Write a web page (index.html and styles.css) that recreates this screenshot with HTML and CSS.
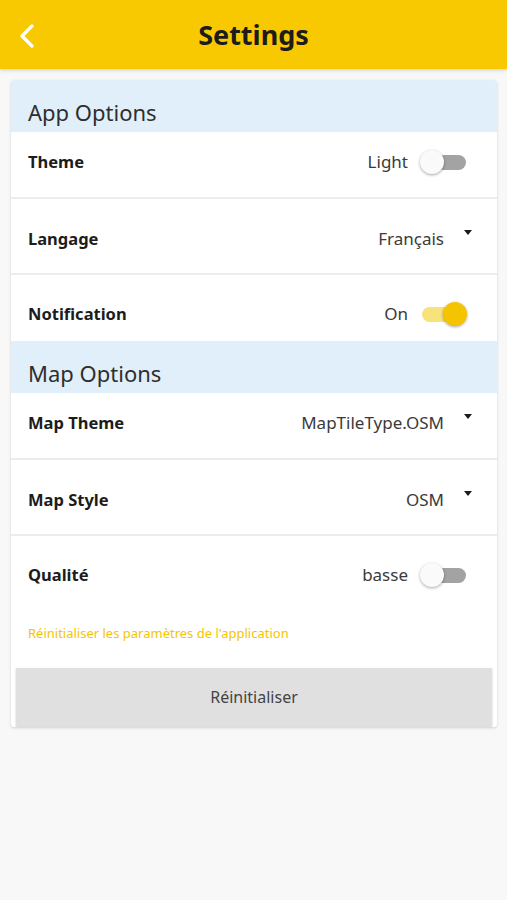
FILE: index.html
```html
<!DOCTYPE html>
<html lang="fr">
<head>
<meta charset="utf-8">
<title>Settings</title>
<link rel="stylesheet" href="styles.css">
</head>
<body>
<header class="appbar">
  <span class="back">
    <svg width="16" height="24" viewBox="0 0 16 24"><path d="M13 2 L3 12 L13 22" fill="none" stroke="#fff" stroke-width="3.2" stroke-linecap="round" stroke-linejoin="round"/></svg>
  </span>
  <h1 class="title">Settings</h1>
</header>

<main class="card">
  <div class="section">App Options</div>

  <div class="row row-a divided">
    <span class="label">Theme</span>
    <div class="control">
      <span class="value">Light</span>
      <span class="switch"><span class="track"></span><span class="thumb"></span></span>
    </div>
  </div>

  <div class="row row-b divided">
    <span class="label">Langage</span>
    <div class="control drop">
      <span class="value">Français</span>
      <span class="caret"></span>
    </div>
  </div>

  <div class="row row-c">
    <span class="label">Notification</span>
    <div class="control">
      <span class="value">On</span>
      <span class="switch on"><span class="track"></span><span class="thumb"></span></span>
    </div>
  </div>

  <div class="section">Map Options</div>

  <div class="row row-a divided">
    <span class="label">Map Theme</span>
    <div class="control drop">
      <span class="value">MapTileType.OSM</span>
      <span class="caret"></span>
    </div>
  </div>

  <div class="row row-b divided">
    <span class="label">Map Style</span>
    <div class="control drop">
      <span class="value">OSM</span>
      <span class="caret"></span>
    </div>
  </div>

  <div class="row row-d">
    <span class="label">Qualité</span>
    <div class="control">
      <span class="value">basse</span>
      <span class="switch"><span class="track"></span><span class="thumb"></span></span>
    </div>
  </div>

  <p class="note">Réinitialiser les paramètres de l'application</p>

  <button class="reset" type="button">Réinitialiser</button>
</main>
</body>
</html>
```

FILE: styles.css
```css
* { box-sizing: border-box; }

html, body {
  margin: 0;
  padding: 0;
}

body {
  background: #f8f8f8;
  font-family: "Noto Sans", "Open Sans", sans-serif;
  color: #222;
  width: 507px;
  height: 900px;
}

.appbar {
  height: 69px;
  background: #f8c900;
  display: flex;
  align-items: center;
  justify-content: center;
  position: relative;
  box-shadow: 0 1px 4px rgba(0,0,0,0.18);
}

.back {
  position: absolute;
  left: 19px;
  top: 24px;
  display: block;
  width: 16px;
  height: 24px;
}

.back svg { display: block; }

.title {
  margin: 0;
  font-size: 27px;
  font-weight: 700;
  color: #1c1c1c;
  letter-spacing: 0;
  line-height: 32px;
}

.card {
  margin: 11px 10px 0 11px;
  background: #fff;
  border-radius: 3px;
  box-shadow: 0 1px 3px rgba(0,0,0,0.16);
  padding-bottom: 1px;
  overflow: hidden;
}

.section {
  height: 52px;
  background: #e1effa;
  padding: 19px 0 0 17px;
  font-size: 22px;
  line-height: 26px;
  color: #2e2e2e;
}

.row {
  display: flex;
  justify-content: space-between;
  align-items: flex-start;
  padding-left: 17px;
}

.row.divided { border-bottom: 2px solid #ececec; }

.row-a { height: 67px; padding-top: 18px; }
.row-b { height: 76px; padding-top: 28px; }
.row-c { height: 66px; padding-top: 27px; }
.row-d { height: 66px; padding-top: 27px; }

.label {
  font-size: 16.5px;
  font-weight: 700;
  line-height: 24px;
  color: #1c1c1c;
}

.control {
  display: flex;
  align-items: center;
  height: 24px;
  padding-right: 31px;
}

.control.drop { padding-right: 25px; }

.value {
  font-size: 17px;
  line-height: 24px;
  color: #3a3a3a;
}

.switch {
  position: relative;
  width: 46px;
  height: 24px;
  margin-left: 12px;
  display: block;
}

.track {
  position: absolute;
  left: 2px;
  right: 0;
  top: 5px;
  height: 15px;
  border-radius: 8px;
  background: #a3a3a3;
}

.thumb {
  position: absolute;
  left: 0;
  top: 0;
  width: 24px;
  height: 24px;
  border-radius: 50%;
  background: #fafafa;
  box-shadow: 0 1px 3px rgba(0,0,0,0.35);
}

.switch.on .track { background: #f7e27c; }
.switch.on .thumb {
  left: auto;
  right: -1px;
  background: #f5c400;
}

.caret {
  display: block;
  width: 0;
  height: 0;
  margin-left: 20px;
  margin-top: -13px;
  border-left: 4.5px solid transparent;
  border-right: 4.5px solid transparent;
  border-top: 5px solid #1c1c1c;
}

.note {
  margin: 0;
  padding: 23px 0 27px 17px;
  font-size: 13px;
  line-height: 16px;
  color: #f5c400;
}

.reset {
  display: block;
  width: 476px;
  height: 58px;
  margin: 0 0 0 5px;
  border: none;
  border-radius: 0;
  background: #e0e0e0;
  box-shadow: 0 1px 2px rgba(0,0,0,0.2);
  font-family: "Noto Sans", "Open Sans", sans-serif;
  font-size: 16px;
  color: #444;
}
```
